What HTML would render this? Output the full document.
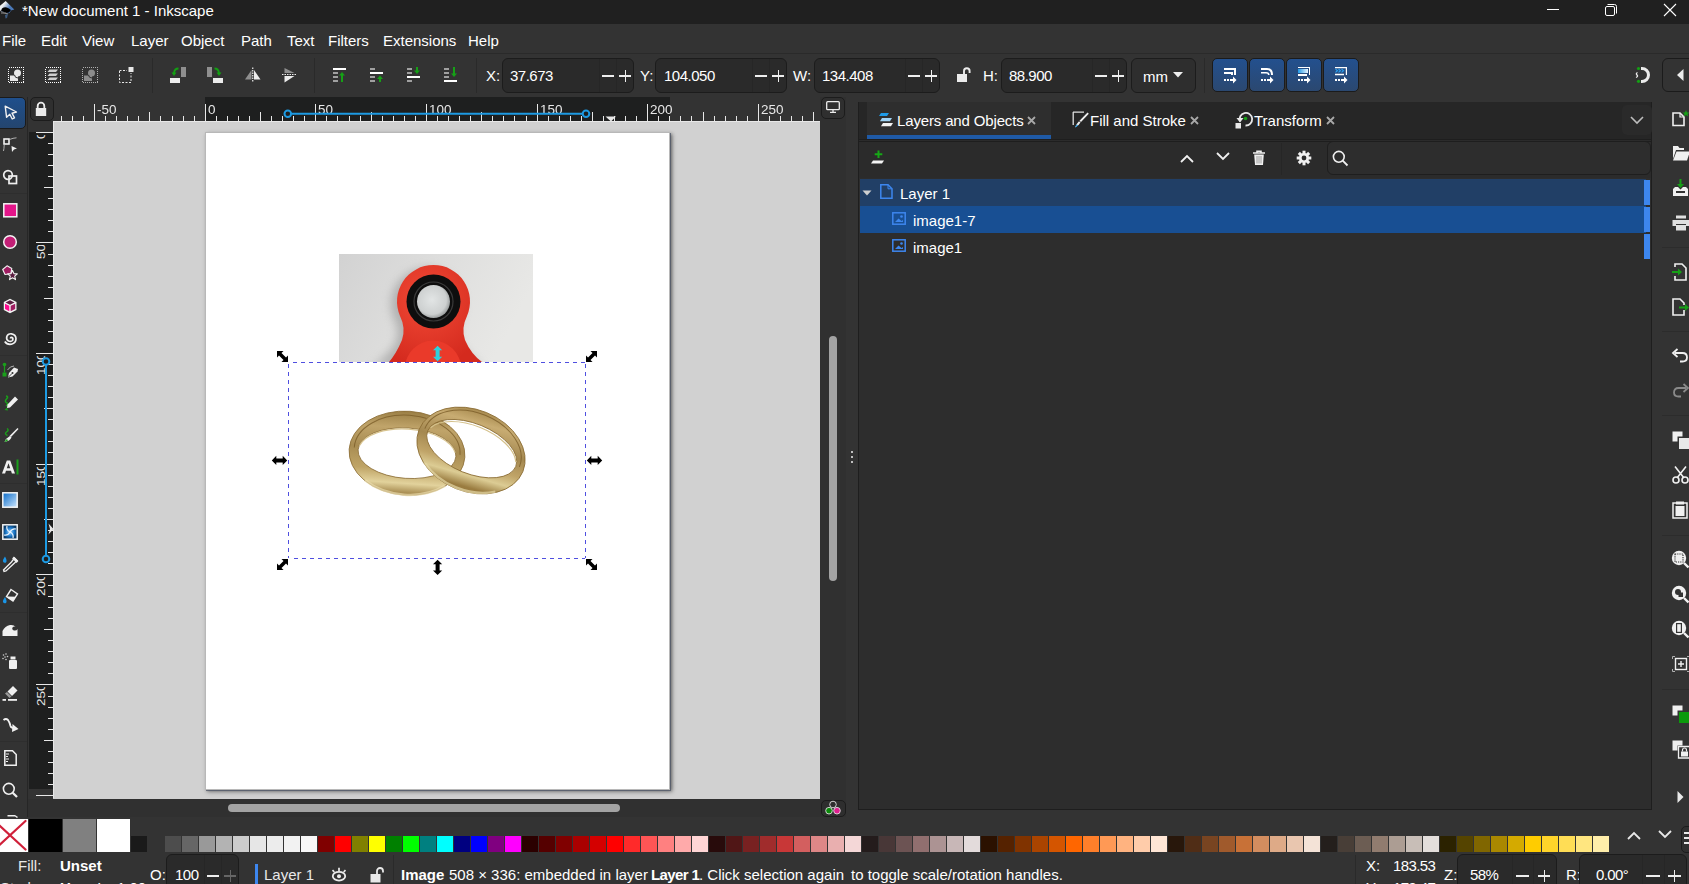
<!DOCTYPE html>
<html><head><meta charset="utf-8">
<style>
*{margin:0;padding:0;box-sizing:border-box}
html,body{width:1689px;height:884px;overflow:hidden;background:#333333;font-family:"Liberation Sans",sans-serif;color:#fff;position:relative}
.a{position:absolute}
.t{position:absolute;white-space:nowrap;line-height:1}
svg{position:absolute;overflow:visible}
.ent{position:absolute;background:#2a2a2a;border:1px solid #1c1c1c;border-radius:6px}
.dv{position:absolute;width:1px;background:#262626}
</style></head><body>

<!-- title bar -->
<div class="a" style="left:0;top:0;width:1689px;height:24px;background:#202020"></div>
<div class="t" style="left:22px;top:3px;font-size:15px;color:#fff">*New document 1 - Inkscape</div>
<!-- menubar -->
<div class="a" style="left:0;top:24px;width:1689px;height:29px;background:#333333"></div>
<div class="a" style="left:0;top:53px;width:1689px;height:1px;background:#2a2a2a"></div>
<!-- toolbar -->
<div class="a" style="left:0;top:54px;width:1689px;height:43px;background:#333333"></div>
<!-- left toolbox -->
<div class="a" style="left:27px;top:97px;width:1px;height:720px;background:#262626"></div>
<!-- ruler top -->
<div class="a" style="left:54px;top:97px;width:766px;height:24px;background:#333333"></div>
<div class="a" style="left:205px;top:97px;width:465px;height:24px;background:#1e1f1f"></div>
<!-- ruler left -->
<div class="a" style="left:29px;top:121px;width:24px;height:678px;background:#333333"></div>
<div class="a" style="left:29px;top:132px;width:24px;height:657px;background:#1e1f1f"></div>
<!-- canvas -->
<div class="a" style="left:53px;top:121px;width:767px;height:678px;background:#d1d1d1"></div>
<div class="a" style="left:205px;top:132px;width:465px;height:657px;background:#fff;box-shadow:2px 2px 3px rgba(0,0,0,.35)"></div>
<!-- scroll area right of canvas -->
<div class="a" style="left:820px;top:97px;width:26px;height:720px;background:#303030"></div>
<div class="a" style="left:28px;top:799px;width:792px;height:18px;background:#303030"></div>
<!-- dock -->
<div class="a" style="left:858px;top:102px;width:794px;height:708px;background:#2b2b2b;border:1px solid #1e1e1e"></div>

<!-- inkscape logo -->
<svg style="left:0;top:0" width="16" height="20" viewBox="0 0 16 20">
<defs><linearGradient id="lg1" x1="0" y1="0" x2="1" y2="0.6"><stop offset="0.35" stop-color="#f0f0f0"/><stop offset="0.75" stop-color="#4a78b8"/></linearGradient></defs>
<path d="M5.7 1 L14.3 9.5 L11 10.5 L9.5 13 L7 13.5 L5 12 L1 11.5 L-1 9 L-1 6.5 Z" fill="url(#lg1)"/>
<path d="M2 8.5 Q5 6.5 8 8 L11 10 L9 12.5 L6.5 13 Q3 11.5 1 11 Z" fill="#000"/>
<path d="M1 12.5 Q4 11.5 8 13.5 L7.5 14.5 Q4 13 1 13.5 Z" fill="#8a8a8a"/>
<path d="M5 15 L8 14 L7 18 L5.5 18.5 Z" fill="#3b5a80"/>
</svg>
<!-- window controls -->
<div class="a" style="left:1547px;top:9px;width:12px;height:1px;background:#fff"></div>
<svg style="left:1604px;top:3px" width="14" height="14" viewBox="0 0 14 14">
<rect x="1.5" y="3.5" width="9" height="9" rx="1.5" fill="none" stroke="#fff" stroke-width="1"/>
<path d="M3.5 1.5 H10.5 Q12.5 1.5 12.5 3.5 V10.5" fill="none" stroke="#fff" stroke-width="1"/>
</svg>
<svg style="left:1663px;top:3px" width="14" height="14" viewBox="0 0 14 14">
<path d="M1 1 L13 13 M13 1 L1 13" stroke="#fff" stroke-width="1.1"/>
</svg>
<div class="t" style="left:2px;top:33px;font-size:15px">File</div>
<div class="t" style="left:41px;top:33px;font-size:15px">Edit</div>
<div class="t" style="left:82px;top:33px;font-size:15px">View</div>
<div class="t" style="left:131px;top:33px;font-size:15px">Layer</div>
<div class="t" style="left:181px;top:33px;font-size:15px">Object</div>
<div class="t" style="left:241px;top:33px;font-size:15px">Path</div>
<div class="t" style="left:287px;top:33px;font-size:15px">Text</div>
<div class="t" style="left:328px;top:33px;font-size:15px">Filters</div>
<div class="t" style="left:383px;top:33px;font-size:15px">Extensions</div>
<div class="t" style="left:468px;top:33px;font-size:15px">Help</div>

<!-- toolbar icons -->
<svg style="left:8px;top:67px" width="16" height="16" viewBox="0 0 16 16">
<rect x="0.5" y="0.5" width="15" height="15" fill="none" stroke="#ffffff" stroke-width="1" stroke-dasharray="1 1" shape-rendering="crispEdges"/>
<circle cx="9.5" cy="6" r="3.5" fill="#e8e8e8"/><rect x="2" y="8.5" width="8" height="5.5" fill="#e8e8e8"/>
<path d="M6.5 8 A3.5 3.5 0 0 0 10 11" fill="none" stroke="#333" stroke-width="1"/>
</svg>
<svg style="left:45px;top:67px" width="16" height="16" viewBox="0 0 16 16">
<rect x="0.5" y="0.5" width="15" height="15" fill="none" stroke="#ffffff" stroke-width="1" stroke-dasharray="1 1" shape-rendering="crispEdges"/>
<path d="M4.5 2.5 H13 L11 5 H2.5 Z M4.5 6.5 H13 L11 9 H2.5 Z M4.5 10.5 H13 L11 13 H2.5 Z" fill="#d0d0d0"/>
</svg>
<svg style="left:82px;top:67px" width="16" height="16" viewBox="0 0 16 16">
<rect x="0.5" y="0.5" width="15" height="15" fill="none" stroke="#b0b0b0" stroke-width="1" stroke-dasharray="1 1" shape-rendering="crispEdges"/>
<circle cx="9.5" cy="6" r="3.5" fill="#8c8c8c"/><rect x="2" y="8.5" width="8" height="5.5" fill="#8c8c8c"/>
<path d="M6.5 8 A3.5 3.5 0 0 0 10 11" fill="none" stroke="#333" stroke-width="1"/>
</svg>
<svg style="left:119px;top:67px" width="16" height="16" viewBox="0 0 16 16">
<path d="M0.5 4 V15.5 H12 V6" fill="none" stroke="#e8e8e8" stroke-width="1" stroke-dasharray="2 1.5"/>
<path d="M0.5 3.5 H8" fill="none" stroke="#e8e8e8" stroke-width="1" stroke-dasharray="2 1.5"/>
<rect x="9.5" y="0" width="5" height="5" fill="#e8e8e8"/>
</svg>
<div class="a" style="left:152px;top:58px;width:1px;height:35px;background:#2a2a2a"></div>
<!-- rotate ccw -->
<svg style="left:170px;top:67px" width="16" height="16" viewBox="0 0 16 16">
<rect x="11" y="0" width="5" height="10" fill="#8f8f8f"/>
<rect x="0" y="11" width="10" height="5" fill="#ececec"/>
<path d="M8.5 1.5 Q4.5 1.5 4 6" fill="none" stroke="#12a012" stroke-width="1.8"/>
<path d="M1.5 5.5 L4 9 L6.5 5.5 Z" fill="#12a012"/>
</svg>
<svg style="left:207px;top:67px" width="16" height="16" viewBox="0 0 16 16">
<rect x="0" y="0" width="5" height="10" fill="#8f8f8f"/>
<rect x="6" y="11" width="10" height="5" fill="#ececec"/>
<path d="M7.5 1.5 Q11.5 1.5 12 6" fill="none" stroke="#12a012" stroke-width="1.8"/>
<path d="M9.5 5.5 L12 9 L14.5 5.5 Z" fill="#12a012"/>
</svg>
<!-- flip h -->
<svg style="left:245px;top:67px" width="16" height="16" viewBox="0 0 16 16">
<path d="M6.5 3 L0 12.5 H6.5 Z" fill="#8f8f8f"/><path d="M9 3 L15.5 12.5 H9 Z" fill="#ececec"/>
<path d="M7.75 0.5 V15.5" stroke="#ececec" stroke-width="1.2" stroke-dasharray="1.5 1"/>
</svg>
<svg style="left:282px;top:67px" width="16" height="16" viewBox="0 0 16 16">
<path d="M2.5 1 L12.5 6 H2.5 Z" fill="#8f8f8f"/><path d="M2.5 9 L12.5 9 L2.5 15.5 Z" fill="#ececec"/>
<path d="M0 7.5 H15" stroke="#ececec" stroke-width="1.2" stroke-dasharray="1.5 1"/>
</svg>
<div class="a" style="left:314px;top:58px;width:1px;height:35px;background:#2a2a2a"></div>
<!-- z-order -->
<svg style="left:333px;top:67px" width="14" height="16" viewBox="0 0 14 16">
<rect x="0" y="1" width="13" height="2" fill="#fff"/>
<rect x="0" y="5" width="5" height="2" fill="#a0a0a0"/><rect x="0" y="9" width="5" height="2" fill="#a0a0a0"/><rect x="0" y="13" width="5" height="2" fill="#a0a0a0"/>
<path d="M9 15 V8" stroke="#16a016" stroke-width="2"/><path d="M6 8.5 L9 5 L12 8.5 Z" fill="#16a016"/>
</svg>
<svg style="left:370px;top:67px" width="14" height="16" viewBox="0 0 14 16">
<rect x="0" y="1" width="5" height="2" fill="#a0a0a0"/>
<rect x="0" y="5" width="13" height="2" fill="#fff"/>
<rect x="0" y="9" width="5" height="2" fill="#a0a0a0"/><rect x="0" y="13" width="5" height="2" fill="#a0a0a0"/>
<path d="M10 15 V11" stroke="#16a016" stroke-width="2"/><path d="M7 12 L10 8.5 L13 12 Z" fill="#16a016"/>
</svg>
<svg style="left:407px;top:67px" width="14" height="16" viewBox="0 0 14 16">
<rect x="0" y="1" width="5" height="2" fill="#a0a0a0"/><rect x="0" y="5" width="5" height="2" fill="#a0a0a0"/>
<rect x="0" y="9" width="13" height="2" fill="#fff"/>
<rect x="0" y="13" width="5" height="2" fill="#a0a0a0"/>
<path d="M10 0 V4" stroke="#16a016" stroke-width="2"/><path d="M7 3.5 L10 7 L13 3.5 Z" fill="#16a016"/>
</svg>
<svg style="left:444px;top:67px" width="14" height="16" viewBox="0 0 14 16">
<rect x="0" y="1" width="5" height="2" fill="#a0a0a0"/><rect x="0" y="5" width="5" height="2" fill="#a0a0a0"/><rect x="0" y="9" width="5" height="2" fill="#a0a0a0"/>
<rect x="0" y="13" width="13" height="2" fill="#fff"/>
<path d="M10 0 V7" stroke="#16a016" stroke-width="2"/><path d="M7 6.5 L10 10 L13 6.5 Z" fill="#16a016"/>
</svg>
<div class="a" style="left:476px;top:58px;width:1px;height:35px;background:#2a2a2a"></div>
<!-- X Y W H -->
<div class="t" style="left:486px;top:68px;font-size:15px">X:</div>
<div class="ent" style="left:502px;top:58px;width:132px;height:35px"></div>
<div class="dv" style="left:599px;top:59px;height:33px"></div><div class="dv" style="left:616px;top:59px;height:33px"></div>
<div class="t" style="left:510px;top:68px;font-size:15px;letter-spacing:-0.5px">37.673</div>
<div class="a" style="left:602px;top:75px;width:12px;height:1.5px;background:#eee"></div>
<div class="a" style="left:619px;top:75px;width:12px;height:1.5px;background:#eee"></div><div class="a" style="left:624.5px;top:69.5px;width:1.5px;height:12px;background:#eee"></div>

<div class="t" style="left:640px;top:68px;font-size:15px">Y:</div>
<div class="ent" style="left:655px;top:58px;width:132px;height:35px"></div>
<div class="dv" style="left:752px;top:59px;height:33px"></div><div class="dv" style="left:769px;top:59px;height:33px"></div>
<div class="t" style="left:664px;top:68px;font-size:15px;letter-spacing:-0.5px">104.050</div>
<div class="a" style="left:755px;top:75px;width:12px;height:1.5px;background:#eee"></div>
<div class="a" style="left:772px;top:75px;width:12px;height:1.5px;background:#eee"></div><div class="a" style="left:777.5px;top:69.5px;width:1.5px;height:12px;background:#eee"></div>

<div class="t" style="left:793px;top:68px;font-size:15px">W:</div>
<div class="ent" style="left:814px;top:58px;width:126px;height:35px"></div>
<div class="dv" style="left:905px;top:59px;height:33px"></div><div class="dv" style="left:922px;top:59px;height:33px"></div>
<div class="t" style="left:822px;top:68px;font-size:15px;letter-spacing:-0.5px">134.408</div>
<div class="a" style="left:908px;top:75px;width:12px;height:1.5px;background:#eee"></div>
<div class="a" style="left:925px;top:75px;width:12px;height:1.5px;background:#eee"></div><div class="a" style="left:930.5px;top:69.5px;width:1.5px;height:12px;background:#eee"></div>
<!-- lock -->
<svg style="left:957px;top:67px" width="14" height="16" viewBox="0 0 14 16">
<rect x="0" y="7" width="10" height="8" fill="#ececec"/>
<path d="M7 7.5 V4 A2.8 2.8 0 0 1 12.6 4 V6" fill="none" stroke="#ececec" stroke-width="1.9"/>
</svg>
<div class="t" style="left:983px;top:68px;font-size:15px">H:</div>
<div class="ent" style="left:1001px;top:58px;width:126px;height:35px"></div>
<div class="dv" style="left:1092px;top:59px;height:33px"></div><div class="dv" style="left:1109px;top:59px;height:33px"></div>
<div class="t" style="left:1009px;top:68px;font-size:15px;letter-spacing:-0.5px">88.900</div>
<div class="a" style="left:1095px;top:75px;width:12px;height:1.5px;background:#eee"></div>
<div class="a" style="left:1112px;top:75px;width:12px;height:1.5px;background:#eee"></div><div class="a" style="left:1117.5px;top:69.5px;width:1.5px;height:12px;background:#eee"></div>
<!-- mm dropdown -->
<div class="ent" style="left:1131px;top:58px;width:65px;height:35px;background:#2e2e2e"></div>
<div class="t" style="left:1143px;top:69px;font-size:15px">mm</div>
<svg style="left:1173px;top:72px" width="10" height="6" viewBox="0 0 10 6"><path d="M0 0 H10 L5 5.5 Z" fill="#eee"/></svg>
<div class="a" style="left:1204px;top:58px;width:1px;height:35px;background:#2a2a2a"></div>
<!-- mode toggle buttons -->
<div class="a" style="left:1212px;top:58px;width:36px;height:34px;border:1px solid #1b1b1b;border-radius:5px;background:linear-gradient(#23508e,#2b4870)"></div>
<div class="a" style="left:1249px;top:58px;width:36px;height:34px;border:1px solid #1b1b1b;border-radius:5px;background:linear-gradient(#23508e,#2b4870)"></div>
<div class="a" style="left:1286px;top:58px;width:36px;height:34px;border:1px solid #1b1b1b;border-radius:5px;background:linear-gradient(#23508e,#2b4870)"></div>
<div class="a" style="left:1323px;top:58px;width:36px;height:34px;border:1px solid #1b1b1b;border-radius:5px;background:linear-gradient(#23508e,#2b4870)"></div>
<svg style="left:1224px;top:67px" width="14" height="16" viewBox="0 0 14 16" shape-rendering="crispEdges">
<path d="M0 1 H12 V8 H10 V3 H0 Z" fill="#fff"/><path d="M0 5 H9 V8 H7 V6.5 H0 Z" fill="#fff"/>
<rect x="0" y="12" width="2" height="2" fill="#fff"/><rect x="3" y="12" width="2" height="2" fill="#fff"/><rect x="6" y="12" width="4" height="2" fill="#fff"/>
<path d="M9 9.5 L12.5 13 L9 16.5 Z" fill="#fff" shape-rendering="auto"/>
</svg>
<svg style="left:1261px;top:67px" width="14" height="16" viewBox="0 0 14 16">
<path d="M0 2 H6 Q11 2 11 8" fill="none" stroke="#fff" stroke-width="2"/><path d="M0 5.8 H5 Q7.8 5.8 7.8 8" fill="none" stroke="#fff" stroke-width="1.6"/>
<rect x="0" y="12" width="2" height="2" fill="#fff"/><rect x="3" y="12" width="2" height="2" fill="#fff"/><rect x="6" y="12" width="4" height="2" fill="#fff"/>
<path d="M9 9.5 L12.5 13 L9 16.5 Z" fill="#fff"/>
</svg>
<svg style="left:1298px;top:67px" width="14" height="16" viewBox="0 0 14 16" shape-rendering="crispEdges">
<defs><linearGradient id="bg3" x1="0" x2="1"><stop offset="0" stop-color="#1f9ae8"/><stop offset="1" stop-color="#e8f4ff"/></linearGradient></defs>
<rect x="0" y="2" width="10" height="4" fill="url(#bg3)"/>
<path d="M0 0 H12 V8 H11 V1 H0 Z" fill="#fff"/><path d="M0 7 H9 V8.5 H0 Z" fill="#fff"/>
<rect x="0" y="12" width="2" height="2" fill="#fff"/><rect x="3" y="12" width="2" height="2" fill="#fff"/><rect x="6" y="12" width="4" height="2" fill="#fff"/>
<path d="M9 9.5 L12.5 13 L9 16.5 Z" fill="#fff" shape-rendering="auto"/>
</svg>
<svg style="left:1335px;top:67px" width="14" height="16" viewBox="0 0 14 16">
<path d="M0 0.6 H11.4 V8" fill="none" stroke="#fff" stroke-width="1.2"/><path d="M0 7.5 H9" fill="none" stroke="#fff" stroke-width="1.5"/>
<path d="M0.5 2 L2.5 3.7 L0.5 5.4 M3.5 2 L5.5 3.7 L3.5 5.4 M6.5 2 L8.5 3.7 L6.5 5.4" fill="none" stroke="#2aa0f0" stroke-width="1.1"/>
<rect x="0" y="12" width="2" height="2" fill="#fff"/><rect x="3" y="12" width="2" height="2" fill="#fff"/><rect x="6" y="12" width="4" height="2" fill="#fff"/>
<path d="M9 9.5 L12.5 13 L9 16.5 Z" fill="#fff"/>
</svg>
<!-- snap -->
<svg style="left:1634px;top:66px" width="18" height="18" viewBox="0 0 18 18">
<path d="M7 2.5 H8 A6.5 6.5 0 0 1 8 15.5 H7" fill="none" stroke="#ececec" stroke-width="3"/>
<circle cx="4.5" cy="2.5" r="1.6" fill="#14a014"/><circle cx="4.5" cy="15.3" r="1.6" fill="#14a014"/>
<path d="M3.5 6.5 Q1.5 7.5 3 9 Q4.5 10.5 2 11.5" fill="none" stroke="#ececec" stroke-width="1.3"/>
</svg>
<div class="a" style="left:1662px;top:58px;width:40px;height:34px;border:1px solid #1b1b1b;border-radius:6px;background:#333"></div>
<svg style="left:1677px;top:69px" width="7" height="12" viewBox="0 0 7 12"><path d="M6.5 0 V12 L0 6 Z" fill="#ececec"/></svg>

<!-- selector active -->
<div class="a" style="left:-6px;top:97px;width:32px;height:32px;border-radius:5px;background:linear-gradient(#1f4f8c,#24456e);border:1px solid #1a1a1a"></div>
<svg style="left:4px;top:105px" width="14" height="16" viewBox="0 0 14 16">
<path d="M1.2 1.2 L12.5 7 L8 8.2 L10.5 12.8 L8.2 14 L5.8 9.3 L2.6 12.3 Z" fill="none" stroke="#f0f0f0" stroke-width="1.4" stroke-linejoin="round"/>
</svg>
<!-- node -->
<svg style="left:3px;top:137px" width="16" height="16" viewBox="0 0 16 16">
<rect x="1" y="2" width="5" height="5" fill="none" stroke="#f0f0f0" stroke-width="1.6"/>
<path d="M6.5 2.5 Q10 1 13.5 0.8" fill="none" stroke="#cfcfcf" stroke-width="0.8"/>
<path d="M1.2 8 Q1 12 0.5 14" fill="none" stroke="#cfcfcf" stroke-width="0.8"/>
<path d="M8.5 9 L14 11.5 L11 12.5 L9 15 Z" fill="#f0f0f0"/>
</svg>
<!-- shape builder -->
<svg style="left:2px;top:169px" width="16" height="16" viewBox="0 0 16 16">
<circle cx="6" cy="6" r="4.3" fill="none" stroke="#f0f0f0" stroke-width="1.7"/>
<rect x="7" y="7" width="7.5" height="7.5" fill="none" stroke="#f0f0f0" stroke-width="1.7"/>
</svg>
<div class="a" style="left:0;top:193px;width:27px;height:1px;background:#2e2e2e"></div>
<!-- rect -->
<svg style="left:3px;top:203px" width="15" height="15" viewBox="0 0 15 15">
<rect x="0.8" y="0.8" width="13" height="13" fill="#e4168a" stroke="#f4f4f4" stroke-width="1.5"/>
</svg>
<!-- ellipse -->
<svg style="left:3px;top:235px" width="15" height="15" viewBox="0 0 15 15">
<circle cx="7" cy="7" r="6.3" fill="#c31f76" stroke="#f4f4f4" stroke-width="1.5"/>
</svg>
<!-- star -->
<svg style="left:2px;top:265px" width="16" height="16" viewBox="0 0 16 16">
<path d="M5 0.8 L9.8 3.5 L8.8 8.8 L3 9.5 L0.7 4.5 Z" fill="#a01d62" stroke="#f4f4f4" stroke-width="1.1" stroke-linejoin="round"/>
<path d="M10.5 5.5 L11.9 8.6 L15.3 8.9 L12.7 11.2 L13.5 14.6 L10.5 12.8 L7.5 14.6 L8.3 11.2 L5.7 8.9 L9.1 8.6 Z" fill="#5a1e40" stroke="#f4f4f4" stroke-width="1.1" stroke-linejoin="round"/>
</svg>
<!-- 3d box -->
<svg style="left:3px;top:298px" width="15" height="16" viewBox="0 0 15 16">
<path d="M7 0.8 L13.5 4 L13.5 12 L7 15.2 L0.8 12 L0.8 4 Z" fill="#f4f4f4"/>
<path d="M7 2.3 L11.5 4.5 L7 6.7 L2.5 4.5 Z" fill="#5a1e40"/>
<path d="M2 5.7 L6.3 7.8 L6.3 13.2 L2 11.1 Z" fill="#ff0d91"/>
<path d="M12.2 5.7 L7.7 7.8 L7.7 13.2 L12.2 11.1 Z" fill="#a01d62"/>
</svg>
<!-- spiral -->
<svg style="left:3px;top:331px" width="15" height="15" viewBox="0 0 15 15">
<path d="M7.5 7.5 Q7.5 6 9 6.5 Q10.5 7.5 9.5 9.5 Q8 11 5.5 10 Q3 8.5 3.8 5.5 Q5 2.5 8.5 2.8 Q12.8 3.5 13 7.5 Q13 12 8.5 13.2 Q4 14 1.8 10.5" fill="none" stroke="#f0f0f0" stroke-width="1.7"/>
</svg>
<div class="a" style="left:0;top:355px;width:27px;height:1px;background:#2e2e2e"></div>
<!-- pen -->
<svg style="left:2px;top:362px" width="17" height="17" viewBox="0 0 17 17">
<circle cx="2.5" cy="2.5" r="1.8" fill="#1aa01a"/><rect x="0.5" y="10.5" width="4" height="4" fill="#1aa01a"/>
<path d="M2.5 4 V10.5" stroke="#1aa01a" stroke-width="1.2"/>
<path d="M5.5 8 Q8 4 12 4" fill="none" stroke="#cfcfcf" stroke-width="0.8"/>
<path d="M16 7 L12 5.5 L7 11 L6 15.5 L10.5 14.5 L15.5 9.5 Z" fill="#f0f0f0"/>
<path d="M6.5 15 L10 11.5" stroke="#333" stroke-width="0.9"/><circle cx="10.5" cy="11" r="1" fill="#333"/>
</svg>
<!-- pencil -->
<svg style="left:3px;top:395px" width="16" height="16" viewBox="0 0 16 16">
<path d="M3 1 Q6 1.5 3.5 4 Q1 6.5 4 8 Q6 9 3 11" fill="none" stroke="#1aa01a" stroke-width="1.5"/>
<path d="M12 1.5 L15 4.5 L7 12.5 L4 13 L4.5 9.5 Z" fill="#f0f0f0"/>
<path d="M1.5 15 L4 12.5 L5 15.5 Z" fill="#1aa01a"/>
</svg>
<!-- calligraphy -->
<svg style="left:3px;top:427px" width="16" height="16" viewBox="0 0 16 16">
<path d="M4 1.5 Q6.5 3 3.5 5 Q1 7 4.5 8.5" fill="none" stroke="#1aa01a" stroke-width="1.4"/>
<path d="M14.5 1 L15.5 2 L8 10 L6.5 9 Z" fill="#f0f0f0"/>
<path d="M7 9 L8.5 10.5 Q7 14 1.5 15 Q3 11 7 9 Z" fill="#f0f0f0"/><path d="M1.5 15 Q2.5 12.5 4 12 L5 13.5 Q3.5 14.5 1.5 15Z" fill="#1aa01a"/>
</svg>
<!-- text -->
<svg style="left:2px;top:459px" width="18" height="16" viewBox="0 0 18 16">
<path d="M0 14.5 L4.8 1.5 H8.2 L13 14.5 H9.9 L9 11.8 H4 L3.1 14.5 Z M4.8 9.2 H8.2 L6.5 4.3 Z" fill="#f0f0f0" fill-rule="evenodd"/>
<rect x="14.5" y="0.5" width="2" height="15" fill="#1aa01a"/>
</svg>
<div class="a" style="left:0;top:483px;width:27px;height:1px;background:#2e2e2e"></div>
<!-- gradient -->
<svg style="left:2px;top:492px" width="16" height="16" viewBox="0 0 16 16">
<defs><linearGradient id="tg1" x1="0" y1="0" x2="1" y2="1"><stop offset="0" stop-color="#0a6bc8"/><stop offset="1" stop-color="#cfe8ff"/></linearGradient></defs>
<rect x="0.8" y="0.8" width="14.4" height="14.4" fill="url(#tg1)" stroke="#f4f4f4" stroke-width="1.5"/>
</svg>
<!-- mesh -->
<svg style="left:2px;top:524px" width="16" height="16" viewBox="0 0 16 16">
<defs><radialGradient id="tg2"><stop offset="0" stop-color="#9fd6ff"/><stop offset="0.6" stop-color="#1976c8"/><stop offset="1" stop-color="#0b3a66"/></radialGradient></defs>
<rect x="0.8" y="0.8" width="14.4" height="14.4" fill="url(#tg2)" stroke="#f4f4f4" stroke-width="1.5"/>
<path d="M8 8 Q4 6 5 2 M8 8 Q10 4 14 5 M8 8 Q12 10 11 14 M8 8 Q6 12 2 11" fill="none" stroke="#e8f4ff" stroke-width="1.2"/>
</svg>
<!-- dropper -->
<svg style="left:2px;top:556px" width="17" height="16" viewBox="0 0 17 16">
<path d="M3 0.5 Q0.5 4 1 5.5 Q2 7.5 4 6.5 Q5.5 5 3 0.5 Z" fill="#1a96e8"/>
<path d="M12.5 2 L15 4.5 L12.5 7 L4 15 L2 15.5 L1.5 14 L9.5 6 Z" fill="none" stroke="#f0f0f0" stroke-width="1.3"/>
<path d="M11 1.5 L15.5 6" stroke="#f0f0f0" stroke-width="2.5"/>
</svg>
<!-- bucket -->
<svg style="left:2px;top:588px" width="17" height="17" viewBox="0 0 17 17">
<path d="M9 1.5 L15.5 6 L11 13 L4.5 8.5 Z" fill="none" stroke="#f0f0f0" stroke-width="1.4"/>
<path d="M6 8.5 L14 8.8 L11 13 L5 9.5Z" fill="#f0f0f0"/>
<path d="M3 9 Q0.5 12.5 1 14 Q2 16 4 15 Q5.5 13.5 3 9 Z" fill="#1a96e8"/>
</svg>
<div class="a" style="left:0;top:612px;width:27px;height:1px;background:#2e2e2e"></div>
<!-- tweak -->
<svg style="left:2px;top:621px" width="17" height="16" viewBox="0 0 17 16">
<path d="M0.5 15 V10 Q3 5 8 4 Q12 3.5 13.5 6 Q12 5 10.5 6.5 Q9.5 8.5 12 9.5 Q14.5 10 15.5 8 V15 Z" fill="#f0f0f0"/>
</svg>
<!-- spray -->
<svg style="left:2px;top:653px" width="17" height="17" viewBox="0 0 17 17">
<rect x="7" y="7" width="8" height="9" rx="1" fill="#f0f0f0"/><rect x="8.5" y="3.5" width="5" height="3" fill="#f0f0f0"/>
<g fill="#cfcfcf"><circle cx="1.5" cy="2" r="0.8"/><circle cx="4" cy="1" r="0.8"/><circle cx="3" cy="4" r="0.8"/><circle cx="5.5" cy="3.5" r="0.8"/><circle cx="1" cy="5.5" r="0.8"/><circle cx="4" cy="6.5" r="0.8"/></g>
</svg>
<!-- eraser -->
<svg style="left:2px;top:685px" width="17" height="16" viewBox="0 0 17 16">
<path d="M11 1 L15.5 5.5 L10 11 L5.5 6.5 Z" fill="#f0f0f0"/>
<path d="M5 7 L9.5 11.5 L7.5 13 L3 8.5 Z" fill="#9a9a9a"/>
<rect x="0.5" y="14" width="3.5" height="1.8" fill="#f0f0f0"/><rect x="6" y="14" width="9" height="1.8" fill="#f0f0f0"/>
</svg>
<!-- connector -->
<svg style="left:3px;top:717px" width="16" height="16" viewBox="0 0 16 16">
<path d="M0.5 3 Q3 1 5 3 Q7 6 7.5 9 Q8 11 11 11" fill="none" stroke="#f0f0f0" stroke-width="1.8"/>
<path d="M9.5 7 L15.5 12 L9 15 Z" fill="#f0f0f0"/>
</svg>
<div class="a" style="left:0;top:741px;width:27px;height:1px;background:#2e2e2e"></div>
<!-- pages -->
<svg style="left:4px;top:750px" width="13" height="16" viewBox="0 0 13 16">
<path d="M0.8 0.8 H8.5 L12.2 4.5 V15.2 H0.8 Z" fill="none" stroke="#f0f0f0" stroke-width="1.5"/>
<path d="M2 4 H5 M2 6.5 H4 M2 9 H5 M2 11.5 H4" stroke="#f0f0f0" stroke-width="1.1"/>
</svg>
<!-- zoom -->
<svg style="left:2px;top:782px" width="16" height="16" viewBox="0 0 16 16">
<circle cx="6.8" cy="6.8" r="5.4" fill="none" stroke="#f0f0f0" stroke-width="1.6"/>
<path d="M10.7 10.7 L15 15" stroke="#f0f0f0" stroke-width="2.3"/>
</svg>
<!-- measure partial -->
<svg style="left:7px;top:814px" width="12" height="6" viewBox="0 0 12 6">
<path d="M0.5 1 H8 L11 3 L10 4 L8 2.5 H0.5 Z" fill="#f0f0f0"/>
</svg>

<div class="a" style="left:61px;top:116px;width:1px;height:5px;background:#e8e8e8"></div>
<div class="a" style="left:72px;top:116px;width:1px;height:5px;background:#e8e8e8"></div>
<div class="a" style="left:83px;top:116px;width:1px;height:5px;background:#e8e8e8"></div>
<div class="a" style="left:94px;top:104px;width:1px;height:17px;background:#e8e8e8"></div>
<div class="t" style="left:97px;top:104px;font-size:13.5px;color:#e8e8e8;transform-origin:0 0;transform:scaleY(0.88)">-50</div>
<div class="a" style="left:105px;top:116px;width:1px;height:5px;background:#e8e8e8"></div>
<div class="a" style="left:116px;top:116px;width:1px;height:5px;background:#e8e8e8"></div>
<div class="a" style="left:127px;top:116px;width:1px;height:5px;background:#e8e8e8"></div>
<div class="a" style="left:138px;top:116px;width:1px;height:5px;background:#e8e8e8"></div>
<div class="a" style="left:149px;top:112px;width:1px;height:9px;background:#e8e8e8"></div>
<div class="a" style="left:160px;top:116px;width:1px;height:5px;background:#e8e8e8"></div>
<div class="a" style="left:172px;top:116px;width:1px;height:5px;background:#e8e8e8"></div>
<div class="a" style="left:183px;top:116px;width:1px;height:5px;background:#e8e8e8"></div>
<div class="a" style="left:194px;top:116px;width:1px;height:5px;background:#e8e8e8"></div>
<div class="a" style="left:205px;top:104px;width:1px;height:17px;background:#e8e8e8"></div>
<div class="t" style="left:208px;top:104px;font-size:13.5px;color:#e8e8e8;transform-origin:0 0;transform:scaleY(0.88)">0</div>
<div class="a" style="left:216px;top:116px;width:1px;height:5px;background:#e8e8e8"></div>
<div class="a" style="left:227px;top:116px;width:1px;height:5px;background:#e8e8e8"></div>
<div class="a" style="left:238px;top:116px;width:1px;height:5px;background:#e8e8e8"></div>
<div class="a" style="left:249px;top:116px;width:1px;height:5px;background:#e8e8e8"></div>
<div class="a" style="left:260px;top:112px;width:1px;height:9px;background:#e8e8e8"></div>
<div class="a" style="left:271px;top:116px;width:1px;height:5px;background:#e8e8e8"></div>
<div class="a" style="left:282px;top:116px;width:1px;height:5px;background:#e8e8e8"></div>
<div class="a" style="left:293px;top:116px;width:1px;height:5px;background:#e8e8e8"></div>
<div class="a" style="left:304px;top:116px;width:1px;height:5px;background:#e8e8e8"></div>
<div class="a" style="left:315px;top:104px;width:1px;height:17px;background:#e8e8e8"></div>
<div class="t" style="left:318px;top:104px;font-size:13.5px;color:#e8e8e8;transform-origin:0 0;transform:scaleY(0.88)">50</div>
<div class="a" style="left:326px;top:116px;width:1px;height:5px;background:#e8e8e8"></div>
<div class="a" style="left:337px;top:116px;width:1px;height:5px;background:#e8e8e8"></div>
<div class="a" style="left:349px;top:116px;width:1px;height:5px;background:#e8e8e8"></div>
<div class="a" style="left:360px;top:116px;width:1px;height:5px;background:#e8e8e8"></div>
<div class="a" style="left:371px;top:112px;width:1px;height:9px;background:#e8e8e8"></div>
<div class="a" style="left:382px;top:116px;width:1px;height:5px;background:#e8e8e8"></div>
<div class="a" style="left:393px;top:116px;width:1px;height:5px;background:#e8e8e8"></div>
<div class="a" style="left:404px;top:116px;width:1px;height:5px;background:#e8e8e8"></div>
<div class="a" style="left:415px;top:116px;width:1px;height:5px;background:#e8e8e8"></div>
<div class="a" style="left:426px;top:104px;width:1px;height:17px;background:#e8e8e8"></div>
<div class="t" style="left:429px;top:104px;font-size:13.5px;color:#e8e8e8;transform-origin:0 0;transform:scaleY(0.88)">100</div>
<div class="a" style="left:437px;top:116px;width:1px;height:5px;background:#e8e8e8"></div>
<div class="a" style="left:448px;top:116px;width:1px;height:5px;background:#e8e8e8"></div>
<div class="a" style="left:459px;top:116px;width:1px;height:5px;background:#e8e8e8"></div>
<div class="a" style="left:470px;top:116px;width:1px;height:5px;background:#e8e8e8"></div>
<div class="a" style="left:481px;top:112px;width:1px;height:9px;background:#e8e8e8"></div>
<div class="a" style="left:492px;top:116px;width:1px;height:5px;background:#e8e8e8"></div>
<div class="a" style="left:503px;top:116px;width:1px;height:5px;background:#e8e8e8"></div>
<div class="a" style="left:514px;top:116px;width:1px;height:5px;background:#e8e8e8"></div>
<div class="a" style="left:526px;top:116px;width:1px;height:5px;background:#e8e8e8"></div>
<div class="a" style="left:537px;top:104px;width:1px;height:17px;background:#e8e8e8"></div>
<div class="t" style="left:540px;top:104px;font-size:13.5px;color:#e8e8e8;transform-origin:0 0;transform:scaleY(0.88)">150</div>
<div class="a" style="left:548px;top:116px;width:1px;height:5px;background:#e8e8e8"></div>
<div class="a" style="left:559px;top:116px;width:1px;height:5px;background:#e8e8e8"></div>
<div class="a" style="left:570px;top:116px;width:1px;height:5px;background:#e8e8e8"></div>
<div class="a" style="left:581px;top:116px;width:1px;height:5px;background:#e8e8e8"></div>
<div class="a" style="left:592px;top:112px;width:1px;height:9px;background:#e8e8e8"></div>
<div class="a" style="left:603px;top:116px;width:1px;height:5px;background:#e8e8e8"></div>
<div class="a" style="left:614px;top:116px;width:1px;height:5px;background:#e8e8e8"></div>
<div class="a" style="left:625px;top:116px;width:1px;height:5px;background:#e8e8e8"></div>
<div class="a" style="left:636px;top:116px;width:1px;height:5px;background:#e8e8e8"></div>
<div class="a" style="left:647px;top:104px;width:1px;height:17px;background:#e8e8e8"></div>
<div class="t" style="left:650px;top:104px;font-size:13.5px;color:#e8e8e8;transform-origin:0 0;transform:scaleY(0.88)">200</div>
<div class="a" style="left:658px;top:116px;width:1px;height:5px;background:#e8e8e8"></div>
<div class="a" style="left:669px;top:116px;width:1px;height:5px;background:#e8e8e8"></div>
<div class="a" style="left:680px;top:116px;width:1px;height:5px;background:#e8e8e8"></div>
<div class="a" style="left:691px;top:116px;width:1px;height:5px;background:#e8e8e8"></div>
<div class="a" style="left:703px;top:112px;width:1px;height:9px;background:#e8e8e8"></div>
<div class="a" style="left:714px;top:116px;width:1px;height:5px;background:#e8e8e8"></div>
<div class="a" style="left:725px;top:116px;width:1px;height:5px;background:#e8e8e8"></div>
<div class="a" style="left:736px;top:116px;width:1px;height:5px;background:#e8e8e8"></div>
<div class="a" style="left:747px;top:116px;width:1px;height:5px;background:#e8e8e8"></div>
<div class="a" style="left:758px;top:104px;width:1px;height:17px;background:#e8e8e8"></div>
<div class="t" style="left:761px;top:104px;font-size:13.5px;color:#e8e8e8;transform-origin:0 0;transform:scaleY(0.88)">250</div>
<div class="a" style="left:769px;top:116px;width:1px;height:5px;background:#e8e8e8"></div>
<div class="a" style="left:780px;top:116px;width:1px;height:5px;background:#e8e8e8"></div>
<div class="a" style="left:791px;top:116px;width:1px;height:5px;background:#e8e8e8"></div>
<div class="a" style="left:802px;top:116px;width:1px;height:5px;background:#e8e8e8"></div>
<div class="a" style="left:813px;top:112px;width:1px;height:9px;background:#e8e8e8"></div>
<div class="a" style="left:54px;top:121px;width:766px;height:1px;background:#e8e8e8"></div>
<div class="a" style="left:36px;top:132px;width:17px;height:1px;background:#e8e8e8"></div>
<div class="a" style="left:48px;top:143px;width:5px;height:1px;background:#e8e8e8"></div>
<div class="a" style="left:48px;top:154px;width:5px;height:1px;background:#e8e8e8"></div>
<div class="a" style="left:48px;top:165px;width:5px;height:1px;background:#e8e8e8"></div>
<div class="a" style="left:48px;top:176px;width:5px;height:1px;background:#e8e8e8"></div>
<div class="a" style="left:44px;top:187px;width:9px;height:1px;background:#e8e8e8"></div>
<div class="a" style="left:48px;top:198px;width:5px;height:1px;background:#e8e8e8"></div>
<div class="a" style="left:48px;top:209px;width:5px;height:1px;background:#e8e8e8"></div>
<div class="a" style="left:48px;top:220px;width:5px;height:1px;background:#e8e8e8"></div>
<div class="a" style="left:48px;top:231px;width:5px;height:1px;background:#e8e8e8"></div>
<div class="a" style="left:36px;top:242px;width:17px;height:1px;background:#e8e8e8"></div>
<div class="a" style="left:48px;top:254px;width:5px;height:1px;background:#e8e8e8"></div>
<div class="a" style="left:48px;top:265px;width:5px;height:1px;background:#e8e8e8"></div>
<div class="a" style="left:48px;top:276px;width:5px;height:1px;background:#e8e8e8"></div>
<div class="a" style="left:48px;top:287px;width:5px;height:1px;background:#e8e8e8"></div>
<div class="a" style="left:44px;top:298px;width:9px;height:1px;background:#e8e8e8"></div>
<div class="a" style="left:48px;top:309px;width:5px;height:1px;background:#e8e8e8"></div>
<div class="a" style="left:48px;top:320px;width:5px;height:1px;background:#e8e8e8"></div>
<div class="a" style="left:48px;top:331px;width:5px;height:1px;background:#e8e8e8"></div>
<div class="a" style="left:48px;top:342px;width:5px;height:1px;background:#e8e8e8"></div>
<div class="a" style="left:36px;top:353px;width:17px;height:1px;background:#e8e8e8"></div>
<div class="a" style="left:48px;top:364px;width:5px;height:1px;background:#e8e8e8"></div>
<div class="a" style="left:48px;top:375px;width:5px;height:1px;background:#e8e8e8"></div>
<div class="a" style="left:48px;top:386px;width:5px;height:1px;background:#e8e8e8"></div>
<div class="a" style="left:48px;top:397px;width:5px;height:1px;background:#e8e8e8"></div>
<div class="a" style="left:44px;top:408px;width:9px;height:1px;background:#e8e8e8"></div>
<div class="a" style="left:48px;top:419px;width:5px;height:1px;background:#e8e8e8"></div>
<div class="a" style="left:48px;top:430px;width:5px;height:1px;background:#e8e8e8"></div>
<div class="a" style="left:48px;top:441px;width:5px;height:1px;background:#e8e8e8"></div>
<div class="a" style="left:48px;top:452px;width:5px;height:1px;background:#e8e8e8"></div>
<div class="a" style="left:36px;top:464px;width:17px;height:1px;background:#e8e8e8"></div>
<div class="a" style="left:48px;top:475px;width:5px;height:1px;background:#e8e8e8"></div>
<div class="a" style="left:48px;top:486px;width:5px;height:1px;background:#e8e8e8"></div>
<div class="a" style="left:48px;top:497px;width:5px;height:1px;background:#e8e8e8"></div>
<div class="a" style="left:48px;top:508px;width:5px;height:1px;background:#e8e8e8"></div>
<div class="a" style="left:44px;top:519px;width:9px;height:1px;background:#e8e8e8"></div>
<div class="a" style="left:48px;top:530px;width:5px;height:1px;background:#e8e8e8"></div>
<div class="a" style="left:48px;top:541px;width:5px;height:1px;background:#e8e8e8"></div>
<div class="a" style="left:48px;top:552px;width:5px;height:1px;background:#e8e8e8"></div>
<div class="a" style="left:48px;top:563px;width:5px;height:1px;background:#e8e8e8"></div>
<div class="a" style="left:36px;top:574px;width:17px;height:1px;background:#e8e8e8"></div>
<div class="a" style="left:48px;top:585px;width:5px;height:1px;background:#e8e8e8"></div>
<div class="a" style="left:48px;top:596px;width:5px;height:1px;background:#e8e8e8"></div>
<div class="a" style="left:48px;top:607px;width:5px;height:1px;background:#e8e8e8"></div>
<div class="a" style="left:48px;top:618px;width:5px;height:1px;background:#e8e8e8"></div>
<div class="a" style="left:44px;top:629px;width:9px;height:1px;background:#e8e8e8"></div>
<div class="a" style="left:48px;top:640px;width:5px;height:1px;background:#e8e8e8"></div>
<div class="a" style="left:48px;top:651px;width:5px;height:1px;background:#e8e8e8"></div>
<div class="a" style="left:48px;top:662px;width:5px;height:1px;background:#e8e8e8"></div>
<div class="a" style="left:48px;top:673px;width:5px;height:1px;background:#e8e8e8"></div>
<div class="a" style="left:36px;top:684px;width:17px;height:1px;background:#e8e8e8"></div>
<div class="a" style="left:48px;top:696px;width:5px;height:1px;background:#e8e8e8"></div>
<div class="a" style="left:48px;top:707px;width:5px;height:1px;background:#e8e8e8"></div>
<div class="a" style="left:48px;top:718px;width:5px;height:1px;background:#e8e8e8"></div>
<div class="a" style="left:48px;top:729px;width:5px;height:1px;background:#e8e8e8"></div>
<div class="a" style="left:44px;top:740px;width:9px;height:1px;background:#e8e8e8"></div>
<div class="a" style="left:48px;top:751px;width:5px;height:1px;background:#e8e8e8"></div>
<div class="a" style="left:48px;top:762px;width:5px;height:1px;background:#e8e8e8"></div>
<div class="a" style="left:48px;top:773px;width:5px;height:1px;background:#e8e8e8"></div>
<div class="a" style="left:48px;top:784px;width:5px;height:1px;background:#e8e8e8"></div>
<div class="a" style="left:36px;top:795px;width:17px;height:1px;background:#e8e8e8"></div>
<div class="a" style="left:0;top:121px;width:54px;height:677px;overflow:hidden"><div class="a" style="left:34px;top:14px;width:14px;height:26px;overflow:hidden"><div class="t" style="left:2px;top:0;font-size:13.5px;color:#e8e8e8;transform-origin:0 0;transform:translate(0px,4.0px) rotate(-90deg) scaleY(0.85)">0</div></div><div class="a" style="left:34px;top:124px;width:14px;height:26px;overflow:hidden"><div class="t" style="left:2px;top:0;font-size:13.5px;color:#e8e8e8;transform-origin:0 0;transform:translate(0px,14.0px) rotate(-90deg) scaleY(0.85)">50</div></div><div class="a" style="left:34px;top:235px;width:14px;height:26px;overflow:hidden"><div class="t" style="left:2px;top:0;font-size:13.5px;color:#e8e8e8;transform-origin:0 0;transform:translate(0px,19.0px) rotate(-90deg) scaleY(0.85)">100</div></div><div class="a" style="left:34px;top:346px;width:14px;height:26px;overflow:hidden"><div class="t" style="left:2px;top:0;font-size:13.5px;color:#e8e8e8;transform-origin:0 0;transform:translate(0px,19.0px) rotate(-90deg) scaleY(0.85)">150</div></div><div class="a" style="left:34px;top:456px;width:14px;height:26px;overflow:hidden"><div class="t" style="left:2px;top:0;font-size:13.5px;color:#e8e8e8;transform-origin:0 0;transform:translate(0px,19.0px) rotate(-90deg) scaleY(0.85)">200</div></div><div class="a" style="left:34px;top:566px;width:14px;height:26px;overflow:hidden"><div class="t" style="left:2px;top:0;font-size:13.5px;color:#e8e8e8;transform-origin:0 0;transform:translate(0px,19.0px) rotate(-90deg) scaleY(0.85)">250</div></div><div class="a" style="left:34px;top:677px;width:14px;height:26px;overflow:hidden"><div class="t" style="left:2px;top:0;font-size:13.5px;color:#e8e8e8;transform-origin:0 0;transform:translate(0px,19.0px) rotate(-90deg) scaleY(0.85)">300</div></div></div>
<div class="a" style="left:53px;top:121px;width:1px;height:677px;background:#e8e8e8"></div>
<svg style="left:0;top:0" width="1" height="1"></svg>
<svg style="left:280px;top:106px" width="320" height="16" viewBox="0 0 320 16">
<path d="M11.5 7.8 H302" stroke="#1d9ae2" stroke-width="2"/>
<circle cx="7.8" cy="7.8" r="3.3" fill="#1e1f1f" stroke="#1d9ae2" stroke-width="2"/>
<circle cx="306" cy="7.8" r="3.3" fill="#1e1f1f" stroke="#1d9ae2" stroke-width="2"/>
</svg>
<svg style="left:38px;top:354px" width="16" height="214" viewBox="0 0 16 214">
<path d="M8 11 V201" stroke="#1d9ae2" stroke-width="2"/>
<circle cx="8" cy="7.5" r="3.3" fill="#1e1f1f" stroke="#1d9ae2" stroke-width="2"/>
<circle cx="8" cy="205" r="3.3" fill="#1e1f1f" stroke="#1d9ae2" stroke-width="2"/>
</svg>
<svg style="left:605px;top:116px" width="12" height="6" viewBox="0 0 12 6"><path d="M0.5 0.5 H11 L6 5.5 Z" fill="#e8e8e8"/></svg>
<svg style="left:48px;top:523px" width="6" height="12" viewBox="0 0 6 12"><path d="M0.5 0.5 L5.5 6 L0.5 11.5 L2 6 Z" fill="#e8e8e8"/></svg>
<div class="a" style="left:30px;top:97px;width:24px;height:24px;border:1px solid #1c1c1c;border-radius:5px;background:#2f2f2f"></div>
<svg style="left:35px;top:101px" width="12" height="16" viewBox="0 0 12 16">
<path d="M2.7 7 V5 A3.3 3.3 0 0 1 9.3 5 V7" fill="none" stroke="#ececec" stroke-width="1.8"/>
<rect x="0.8" y="7" width="10.4" height="8" fill="#ececec"/>
</svg>
<div class="a" style="left:821px;top:97px;width:24px;height:22px;border:1px solid #1c1c1c;border-radius:5px;background:#2f2f2f"></div>
<svg style="left:826px;top:101px" width="14" height="12" viewBox="0 0 14 12">
<rect x="0.7" y="0.7" width="12.6" height="8" rx="1" fill="none" stroke="#ececec" stroke-width="1.3"/>
<path d="M7 9 V11 M4 11.3 H10" stroke="#ececec" stroke-width="1.3"/>
</svg>
<!-- page shadow/border -->
<div class="a" style="left:205px;top:132px;width:465px;height:658px;background:#fff;border:1px solid #b8b8b8;box-shadow:1px 1px 0 rgba(80,88,105,.75),2px 2px 5px rgba(0,0,0,.28)"></div>
<!-- spinner image -->
<svg style="left:339px;top:254px;overflow:hidden" width="194" height="108" viewBox="0 0 194 108">
<defs>
<linearGradient id="sbg" x1="0" y1="0" x2="1" y2="0.3"><stop offset="0" stop-color="#d2d2d2"/><stop offset="0.5" stop-color="#dededd"/><stop offset="1" stop-color="#e8e8e6"/></linearGradient>
<filter id="blur1" x="-50%" y="-50%" width="200%" height="200%"><feGaussianBlur stdDeviation="5"/></filter>
<radialGradient id="hole1" cx="0.45" cy="0.45" r="0.55"><stop offset="0" stop-color="#e2e5e5"/><stop offset="0.8" stop-color="#cdd0d0"/><stop offset="1" stop-color="#a0a4a4"/></radialGradient>
<radialGradient id="red1" cx="0.4" cy="0.35" r="0.7"><stop offset="0" stop-color="#f24a36"/><stop offset="1" stop-color="#d42a1e"/></radialGradient>
</defs>
<rect width="194" height="108" fill="url(#sbg)"/>
<path d="M88 14 A36.5 36.5 0 0 1 121 65 Q116 76 120 88 Q126 100 143 112 H34 Q51 100 57 88 Q61 76 55 65 A36.5 36.5 0 0 1 88 14 Z" fill="#8c8c8c" opacity="0.55" filter="url(#blur1)"/>
<path d="M94.5 11 A36.5 36.5 0 0 1 128 62 Q122 74 126 86 Q132 100 143 108 H50 Q57 100 63 86 Q67 74 61 62 A36.5 36.5 0 0 1 94.5 11 Z" fill="url(#red1)"/>
<circle cx="94.5" cy="47.5" r="27" fill="#0e0e0e"/>
<circle cx="94.5" cy="47.5" r="19.5" fill="none" stroke="#3a3a3a" stroke-width="1.2"/>
<circle cx="94.5" cy="47.5" r="16.5" fill="url(#hole1)"/>
<circle cx="94" cy="114.5" r="28" fill="#ea3a2a"/>
</svg>
<!-- rings image -->
<svg style="left:288px;top:362px" width="298" height="197" viewBox="0 0 298 197">
<defs>
<linearGradient id="gold1" x1="0" y1="0" x2="0" y2="1"><stop offset="0" stop-color="#9a7e44"/><stop offset="0.2" stop-color="#c0a46a"/><stop offset="0.45" stop-color="#a88c52"/><stop offset="0.7" stop-color="#bfa466"/><stop offset="0.86" stop-color="#e2d29c"/><stop offset="1" stop-color="#9c7e42"/></linearGradient>
<linearGradient id="gold2" x1="0" y1="0" x2="0.15" y2="1"><stop offset="0" stop-color="#9a7c40"/><stop offset="0.22" stop-color="#c8ac72"/><stop offset="0.5" stop-color="#a48850"/><stop offset="0.72" stop-color="#c0a468"/><stop offset="0.86" stop-color="#dccc94"/><stop offset="1" stop-color="#9a7c40"/></linearGradient>
</defs>
<g transform="translate(119 91.2) rotate(4)">
<path fill-rule="evenodd" fill="url(#gold1)" stroke="#8a6c34" stroke-width="0.8" d="M-58 0 A58 42 0 1 0 58 0 A58 42 0 1 0 -58 0 Z M-49 0 A49 25.2 0 1 0 49 0 A49 25.2 0 1 0 -49 0 Z"/>
<path d="M-53 -2 A53 36 0 0 1 53 -2" fill="none" stroke="#7a5c28" stroke-width="1" opacity="0.8"/><path d="M-48 -4 A49 25.2 0 0 1 48 -4" fill="none" stroke="#d8c490" stroke-width="1.2"/>
<path d="M-40 30 A58 42 0 0 0 40 30" fill="none" stroke="#eadcac" stroke-width="2.5" opacity="0.7"/>
</g>
<g transform="translate(183 88.5) rotate(22)">
<path fill-rule="evenodd" fill="url(#gold2)" stroke="#8a6c34" stroke-width="0.8" d="M-56 0 A56 41 0 1 0 56 0 A56 41 0 1 0 -56 0 Z M-47.5 -2 A47.5 25 0 1 0 47.5 -2 A47.5 25 0 1 0 -47.5 -2 Z"/>
<path d="M-51 -3 A51 35 0 0 1 51 -3" fill="none" stroke="#7a5c28" stroke-width="1" opacity="0.8"/><path d="M-46 -6 A47.5 25 0 0 1 46 -6" fill="none" stroke="#d4c08a" stroke-width="1.2"/>
<path d="M-38 29 A56 41 0 0 0 38 29" fill="none" stroke="#e6d8a6" stroke-width="2.5" opacity="0.7"/>
</g>
</svg>
<!-- selection bbox -->
<svg style="left:0;top:0" width="1" height="1" viewBox="0 0 1 1" shape-rendering="crispEdges"></svg>
<svg style="left:280px;top:355px" width="320" height="210" viewBox="280 355 320 210" shape-rendering="crispEdges">
<path d="M293 362.5 H585" stroke="#4f4fe0" stroke-width="1" stroke-dasharray="4 4"/>
<path d="M293 558.5 H585" stroke="#4f4fe0" stroke-width="1" stroke-dasharray="4 4" stroke-dashoffset="-1"/>
<path d="M288.5 364 V558" stroke="#4f4fe0" stroke-width="1" stroke-dasharray="4 4" stroke-dashoffset="0"/>
<path d="M585.5 364 V558" stroke="#4f4fe0" stroke-width="1" stroke-dasharray="4 4" stroke-dashoffset="0"/>
</svg>
<!-- handles -->
<svg style="left:0;top:0" width="1689" height="884" viewBox="0 0 1689 884">
<defs>
<path id="hh" d="M-7.7 0 L-3.2 -4.6 V-2 H3.2 V-4.6 L7.7 0 L3.2 4.6 V2 H-3.2 V4.6 Z"/>
<path id="hd" d="M-5.5 -5.5 H1 L-1 -3.5 L3.5 1 L5.5 -1 V5.5 H-1 L1 3.5 L-3.5 -1 L-5.5 1 Z"/>
</defs>
<use href="#hh" x="279.5" y="460.4" fill="#000"/>
<use href="#hh" x="594.5" y="460.4" fill="#000"/>
<g transform="translate(437.6 567.4) rotate(90)"><use href="#hh" fill="#000"/></g>
<g transform="translate(437.6 353.5) rotate(90) scale(1 1)"><use href="#hh" fill="#2fd0dc"/></g>
<use href="#hd" x="282.5" y="356.5" fill="#000"/>
<use href="#hd" x="591.5" y="564.5" fill="#000"/>
<g transform="translate(591.5 356.5) rotate(90)"><use href="#hd" fill="#000"/></g>
<g transform="translate(282.5 564.5) rotate(90)"><use href="#hd" fill="#000"/></g>
</svg>
<!-- scrollbars -->
<div class="a" style="left:829px;top:336px;width:8px;height:245px;border-radius:4px;background:#a3a3a3"></div>
<div class="a" style="left:228px;top:804px;width:392px;height:8px;border-radius:4px;background:#a3a3a3"></div>
<div class="a" style="left:846px;top:97px;width:12px;height:721px;background:#333333"></div>
<div class="a" style="left:850.5px;top:450.5px;width:2.6px;height:2.6px;border-radius:50%;background:#f0f0f0"></div>
<div class="a" style="left:850.5px;top:455.5px;width:2.6px;height:2.6px;border-radius:50%;background:#f0f0f0"></div>
<div class="a" style="left:850.5px;top:460.5px;width:2.6px;height:2.6px;border-radius:50%;background:#f0f0f0"></div>
<!-- color managed button -->
<div class="a" style="left:821px;top:800px;width:25px;height:17px;border:1px solid #1c1c1c;border-radius:5px;background:#2e2e2e"></div>
<svg style="left:824px;top:800px" width="18" height="18" viewBox="0 0 18 18">
<circle cx="9" cy="4.5" r="3.3" fill="#2e2e2e" stroke="#e0e0e0" stroke-width="0.9"/>
<circle cx="5" cy="10.7" r="3.3" fill="#0a8a0a" stroke="#e0e0e0" stroke-width="0.9"/>
<circle cx="13" cy="10.7" r="3.3" fill="#e02090" stroke="#e0e0e0" stroke-width="0.9"/>
</svg>

<!-- dock tabs bar -->
<div class="a" style="left:859px;top:102px;width:792px;height:37px;background:#262626"></div>
<div class="a" style="left:867px;top:102px;width:184px;height:37px;background:#2e2e2e"></div>
<div class="a" style="left:867px;top:135px;width:184px;height:4px;background:#1f5aa6"></div>
<div class="a" style="left:859px;top:139px;width:792px;height:1px;background:#1e1e1e"></div>
<div class="a" style="left:859px;top:140px;width:792px;height:1px;background:#2b2b2b"></div>
<div class="a" style="left:859px;top:141px;width:792px;height:1px;background:#1e1e1e"></div>
<!-- tab1 icon -->
<svg style="left:878px;top:113px" width="18" height="16" viewBox="0 0 18 16">
<path d="M3 0 H11 L9 3 H1 Z" fill="#1e9be8"/>
<path d="M4 5 H14 L12 8.2 H2 Z" fill="#9fd2f4"/>
<path d="M5 10 H15 L13 13.2 H3 Z" fill="#f2f2f2"/>
</svg>
<div class="t" style="left:897px;top:113px;font-size:15px;letter-spacing:-0.15px">Layers and Objects</div>
<svg style="left:1027px;top:116px" width="9" height="9" viewBox="0 0 9 9"><path d="M1 1 L8 8 M8 1 L1 8" stroke="#a8a8a8" stroke-width="1.8"/></svg>
<!-- tab2 -->
<svg style="left:1072px;top:111px" width="18" height="18" viewBox="0 0 18 18">
<path d="M1 1.2 H12 M1.2 1 V14" fill="none" stroke="#e0e0e0" stroke-width="1.3"/>
<path d="M15.5 1.5 L16.8 2.8 L9 11 L7.5 9.7 Z" fill="#f0f0f0"/>
<path d="M7 10.2 L8.5 11.5 Q7 14.5 3 16.5 Q4.5 12.5 7 10.2Z" fill="#f0f0f0"/>
<path d="M3 16.5 Q3.8 14.5 5 13.5 L6 14.5 Q4.5 16 3 16.5Z" fill="#1e9be8"/>
</svg>
<svg style="left:0;top:0" width="1" height="1"></svg>
<div class="t" style="left:1090px;top:113px;font-size:15px">Fill and Stroke</div>
<svg style="left:1190px;top:116px" width="9" height="9" viewBox="0 0 9 9"><path d="M1 1 L8 8 M8 1 L1 8" stroke="#a8a8a8" stroke-width="1.8"/></svg>
<!-- tab3 -->
<svg style="left:1235px;top:111px" width="18" height="18" viewBox="0 0 18 18">
<path d="M5 10.5 A6.3 6.3 0 1 1 10.5 14.5" fill="none" stroke="#e8e8e8" stroke-width="1.8"/>
<path d="M1.5 7 L5 11.5 L8.5 7 Z" fill="#e8e8e8"/>
<circle cx="10.5" cy="7.5" r="1.8" fill="#16a016"/>
<rect x="0.5" y="12" width="5.5" height="5.5" fill="#e8e8e8"/>
</svg>
<div class="t" style="left:1254px;top:113px;font-size:15px">Transform</div>
<svg style="left:1326px;top:116px" width="9" height="9" viewBox="0 0 9 9"><path d="M1 1 L8 8 M8 1 L1 8" stroke="#a8a8a8" stroke-width="1.8"/></svg>
<!-- tabs dropdown -->
<div class="a" style="left:1622px;top:105px;width:30px;height:30px;border-radius:5px;background:#2a2a2a"></div>
<svg style="left:1630px;top:116px" width="14" height="8" viewBox="0 0 14 8"><path d="M1 1 L7 7 L13 1" fill="none" stroke="#bdbdbd" stroke-width="1.6"/></svg>
<!-- dock toolbar -->
<div class="a" style="left:859px;top:142px;width:792px;height:36px;background:#2b2b2b"></div>
<svg style="left:870px;top:150px" width="16" height="16" viewBox="0 0 16 16">
<path d="M8.5 0.5 V8 M4.7 4.2 H12.3" stroke="#16a816" stroke-width="2"/>
<path d="M3 10.5 H14 L12 13.5 H1 Z" fill="#f4f4f4"/>
</svg>
<svg style="left:1180px;top:154px" width="14" height="9" viewBox="0 0 14 9"><path d="M1 8 L7 2 L13 8" fill="none" stroke="#f0f0f0" stroke-width="1.8"/></svg>
<svg style="left:1216px;top:152px" width="14" height="9" viewBox="0 0 14 9"><path d="M1 1 L7 7 L13 1" fill="none" stroke="#f0f0f0" stroke-width="1.8"/></svg>
<svg style="left:1252px;top:150px" width="14" height="16" viewBox="0 0 14 16">
<path d="M1 3 H13 M5 3 V1.2 H9 V3" fill="none" stroke="#f0f0f0" stroke-width="1.6"/>
<path d="M2.2 4.5 H11.8 L11 15 H3 Z" fill="#f0f0f0"/>
<path d="M5 6 V13.5 M7 6 V13.5 M9 6 V13.5" stroke="#8a8a8a" stroke-width="0.8"/>
</svg>
<div class="a" style="left:1281px;top:143px;width:1px;height:32px;background:#262626"></div>
<svg style="left:1296px;top:150px" width="16" height="16" viewBox="0 0 16 16">
<g transform="translate(8 8)" fill="#f0f0f0">
<circle r="5"/>
<rect x="-1.5" y="-7.3" width="3" height="14.6"/><rect x="-1.5" y="-7.3" width="3" height="14.6" transform="rotate(45)"/><rect x="-1.5" y="-7.3" width="3" height="14.6" transform="rotate(90)"/><rect x="-1.5" y="-7.3" width="3" height="14.6" transform="rotate(135)"/>
</g>
<circle cx="8" cy="8" r="2.4" fill="#2b2b2b"/>
</svg>
<div class="ent" style="left:1327px;top:141px;width:324px;height:34px;background:#2d2d2d;border-color:#1e1e1e"></div>
<svg style="left:1332px;top:150px" width="17" height="17" viewBox="0 0 17 17">
<circle cx="6.8" cy="6.8" r="5.4" fill="none" stroke="#f0f0f0" stroke-width="1.6"/>
<path d="M10.7 10.7 L15.5 15.5" stroke="#f0f0f0" stroke-width="1.8"/>
</svg>
<!-- list -->
<div class="a" style="left:859px;top:178px;width:792px;height:631px;background:#2d2d2d"></div>
<div class="a" style="left:860px;top:179px;width:786px;height:27px;background:#213f66"></div>
<div class="a" style="left:860px;top:206px;width:786px;height:27px;background:#184f93"></div>
<div class="a" style="left:1644px;top:180px;width:6px;height:25px;background:#3d86ee"></div>
<div class="a" style="left:1644px;top:207px;width:6px;height:25px;background:#3d86ee"></div>
<div class="a" style="left:1644px;top:234px;width:6px;height:25px;background:#3d86ee"></div>
<svg style="left:862px;top:190px" width="10" height="6" viewBox="0 0 10 6"><path d="M0.5 0.5 H9.5 L5 5.5 Z" fill="#cfcfcf"/></svg>
<svg style="left:880px;top:184px" width="13" height="15" viewBox="0 0 13 15">
<path d="M0.8 0.8 H8 L12 4.8 V14.2 H0.8 Z" fill="none" stroke="#3d86ee" stroke-width="1.5"/>
<path d="M8 0.8 V4.8 H12" fill="none" stroke="#3d86ee" stroke-width="1"/>
</svg>
<div class="t" style="left:900px;top:186px;font-size:15px">Layer 1</div>
<svg style="left:892px;top:212px" width="14" height="13" viewBox="0 0 14 13">
<rect x="0.8" y="0.8" width="12.4" height="11.4" fill="none" stroke="#3d86ee" stroke-width="1.5"/>
<path d="M3 10 L6.5 6.5 L9.5 9 L11 8 V10 Z" fill="#3d86ee"/><circle cx="9.5" cy="4.5" r="1.3" fill="#3d86ee"/>
</svg>
<div class="t" style="left:913px;top:213px;font-size:15px">image1-7</div>
<svg style="left:892px;top:239px" width="14" height="13" viewBox="0 0 14 13">
<rect x="0.8" y="0.8" width="12.4" height="11.4" fill="none" stroke="#3d86ee" stroke-width="1.5"/>
<path d="M3 10 L6.5 6.5 L9.5 9 L11 8 V10 Z" fill="#3d86ee"/><circle cx="9.5" cy="4.5" r="1.3" fill="#3d86ee"/>
</svg>
<div class="t" style="left:913px;top:240px;font-size:15px">image1</div>

<!-- commands bar -->
<div class="a" style="left:1652px;top:97px;width:37px;height:721px;background:#333333"></div>
<!-- new -->
<svg style="left:1672px;top:110px" width="18" height="17" viewBox="0 0 18 17">
<path d="M1 3 H8 L12 7 V15.5 H1 Z" fill="none" stroke="#f0f0f0" stroke-width="1.6"/><path d="M8 3 V7 H12" fill="none" stroke="#f0f0f0" stroke-width="1.2"/>
<path d="M14 0 L15 2.5 L17.5 2.5 L15.5 4 L16.3 6.5 L14 5 L11.7 6.5 L12.5 4 L10.5 2.5 L13 2.5 Z" fill="#16a016"/>
</svg>
<!-- open -->
<svg style="left:1672px;top:145px" width="18" height="17" viewBox="0 0 18 17">
<path d="M1 1 H6 L7.5 3 H12 V5 H4 L1 14 Z" fill="#f0f0f0"/><path d="M4.5 6.5 H18 L15 15.5 H1 Z" fill="#f0f0f0"/>
</svg>
<!-- save -->
<svg style="left:1672px;top:179px" width="18" height="18" viewBox="0 0 18 18">
<path d="M8.5 0 V6" stroke="#16a016" stroke-width="2"/><path d="M5 5 L8.5 9 L12 5 Z" fill="#16a016"/>
<path d="M1 10 L3 8 H6 L8.5 10.5 L11 8 H14 L16 10 V17 H1 Z" fill="#f0f0f0"/><rect x="4" y="12" width="9" height="2" fill="#333"/>
</svg>
<!-- print -->
<svg style="left:1672px;top:215px" width="18" height="16" viewBox="0 0 18 16">
<rect x="4" y="0.5" width="10" height="3" fill="#e0e0e0"/>
<path d="M0.5 5 H17.5 V11 H14 V9 H4 V11 H0.5 Z" fill="#e0e0e0"/>
<rect x="4" y="10" width="10" height="5.5" fill="#e0e0e0"/>
</svg>
<div class="a" style="left:1662px;top:247px;width:27px;height:1px;background:#2c2c2c"></div>
<!-- import -->
<svg style="left:1672px;top:263px" width="18" height="18" viewBox="0 0 18 18">
<path d="M3 4 V1 H10 L14 5 V17 H3 V13" fill="none" stroke="#f0f0f0" stroke-width="1.6"/>
<path d="M0 9 H7" stroke="#16a016" stroke-width="2"/><path d="M6 5.5 L10 9 L6 12.5 Z" fill="#16a016"/>
</svg>
<!-- export -->
<svg style="left:1672px;top:298px" width="18" height="18" viewBox="0 0 18 18">
<path d="M12 7 V5 L8 1 H1 V17 H12 V12" fill="none" stroke="#f0f0f0" stroke-width="1.6"/>
<path d="M7 9.5 H14" stroke="#16a016" stroke-width="2"/><path d="M13 6 L17 9.5 L13 13 Z" fill="#16a016"/>
</svg>
<div class="a" style="left:1662px;top:331px;width:27px;height:1px;background:#2c2c2c"></div>
<!-- undo -->
<svg style="left:1672px;top:348px" width="17" height="15" viewBox="0 0 17 15">
<path d="M3 5 H10.5 Q15 5 15 9.5 Q15 13.5 10.5 13.5 H8" fill="none" stroke="#f0f0f0" stroke-width="1.8"/>
<path d="M5.5 1 L1 5 L5.5 9" fill="none" stroke="#f0f0f0" stroke-width="1.8"/>
</svg>
<!-- redo -->
<svg style="left:1672px;top:383px" width="17" height="15" viewBox="0 0 17 15">
<path d="M14 5 H6.5 Q2 5 2 9.5 Q2 13.5 6.5 13.5 H9" fill="none" stroke="#8a8a8a" stroke-width="1.8"/>
<path d="M11.5 1 L16 5 L11.5 9" fill="none" stroke="#8a8a8a" stroke-width="1.8"/>
</svg>
<div class="a" style="left:1662px;top:415px;width:27px;height:1px;background:#2c2c2c"></div>
<!-- duplicate -->
<svg style="left:1672px;top:431px" width="18" height="18" viewBox="0 0 18 18">
<rect x="0.5" y="0.5" width="10" height="10" fill="#f0f0f0"/><rect x="5.5" y="5.5" width="12" height="12" fill="#333"/><rect x="7" y="7" width="11" height="11" fill="#e8e8e8"/>
</svg>
<!-- cut -->
<svg style="left:1672px;top:466px" width="18" height="18" viewBox="0 0 18 18">
<path d="M3 0.5 L12 12 M14 0.5 L5 12" stroke="#f0f0f0" stroke-width="1.6"/>
<circle cx="4" cy="14" r="3" fill="none" stroke="#f0f0f0" stroke-width="1.6"/><circle cx="13" cy="14" r="3" fill="none" stroke="#f0f0f0" stroke-width="1.6"/>
</svg>
<!-- paste -->
<svg style="left:1672px;top:501px" width="18" height="18" viewBox="0 0 18 18">
<rect x="1" y="2" width="14" height="15" fill="none" stroke="#f0f0f0" stroke-width="1.5"/>
<rect x="4" y="0.5" width="8" height="3" fill="#f0f0f0"/><rect x="3.5" y="5" width="9" height="10" fill="#f0f0f0"/>
</svg>
<div class="a" style="left:1662px;top:535px;width:27px;height:1px;background:#2c2c2c"></div>
<!-- zoom selection -->
<svg style="left:1671px;top:550px" width="19" height="19" viewBox="0 0 19 19">
<circle cx="8" cy="8" r="7.2" fill="#f0f0f0"/><rect x="4" y="4" width="8" height="8" fill="none" stroke="#333" stroke-width="1.2" stroke-dasharray="1.2 1"/>
<path d="M13 13 L17.5 17.5" stroke="#f0f0f0" stroke-width="2.4"/>
</svg>
<svg style="left:1671px;top:585px" width="19" height="19" viewBox="0 0 19 19">
<circle cx="8" cy="8" r="7.2" fill="#f0f0f0"/><circle cx="7" cy="7" r="3" fill="#333"/><rect x="7.5" y="7.5" width="4.5" height="4.5" fill="#333"/>
<path d="M13 13 L17.5 17.5" stroke="#f0f0f0" stroke-width="2.4"/>
</svg>
<svg style="left:1671px;top:620px" width="19" height="19" viewBox="0 0 19 19">
<circle cx="8" cy="8" r="7.2" fill="#f0f0f0"/><rect x="5" y="3" width="6" height="10" fill="#333"/><rect x="6.2" y="4.2" width="3.6" height="7.6" fill="#f0f0f0"/>
<path d="M13 13 L17.5 17.5" stroke="#f0f0f0" stroke-width="2.4"/>
</svg>
<svg style="left:1672px;top:656px" width="18" height="16" viewBox="0 0 18 16">
<path d="M0.5 3 V0.5 H3 M15 0.5 H17.5 V3 M17.5 13 V15.5 H15 M3 15.5 H0.5 V13" fill="none" stroke="#b0b0b0" stroke-width="1"/>
<rect x="3.5" y="2.5" width="11" height="11" fill="none" stroke="#f0f0f0" stroke-width="1.4"/>
<path d="M9 5 V11 M6 8 H12" stroke="#f0f0f0" stroke-width="1.4"/>
</svg>
<div class="a" style="left:1662px;top:689px;width:27px;height:1px;background:#2c2c2c"></div>
<!-- clone -->
<svg style="left:1672px;top:705px" width="18" height="18" viewBox="0 0 18 18">
<rect x="0.5" y="0.5" width="10" height="10" fill="#f0f0f0"/><rect x="5.5" y="5.5" width="12.5" height="12.5" fill="#333"/><rect x="7" y="7" width="11" height="11" fill="#0b9a0b"/>
</svg>
<svg style="left:1672px;top:740px" width="18" height="18" viewBox="0 0 18 18">
<rect x="0.5" y="0.5" width="10" height="10" fill="#f0f0f0"/><rect x="5.5" y="5.5" width="12.5" height="12.5" fill="#333"/>
<path d="M6.5 6.5 H18 V18 H6.5 Z" fill="none" stroke="#f0f0f0" stroke-width="1.3"/>
<rect x="9" y="11.5" width="7" height="5" fill="#f0f0f0"/><path d="M10.5 11.5 V10 A2 2 0 0 1 14.5 10 V11.5" fill="none" stroke="#f0f0f0" stroke-width="1.2"/>
</svg>
<!-- more -->
<svg style="left:1677px;top:791px" width="7" height="12" viewBox="0 0 7 12"><path d="M0.5 0 L6.5 6 L0.5 12 Z" fill="#e8e8e8"/></svg>

<div class="a" style="left:131px;top:836px;width:16px;height:16px;background:#1a1a1a"></div>
<div class="a" style="left:148px;top:836px;width:16px;height:16px;background:#333333"></div>
<div class="a" style="left:165px;top:836px;width:16px;height:16px;background:#4d4d4d"></div>
<div class="a" style="left:182px;top:836px;width:16px;height:16px;background:#666666"></div>
<div class="a" style="left:199px;top:836px;width:16px;height:16px;background:#999999"></div>
<div class="a" style="left:216px;top:836px;width:16px;height:16px;background:#b3b3b3"></div>
<div class="a" style="left:233px;top:836px;width:16px;height:16px;background:#cccccc"></div>
<div class="a" style="left:250px;top:836px;width:16px;height:16px;background:#e6e6e6"></div>
<div class="a" style="left:267px;top:836px;width:16px;height:16px;background:#ececec"></div>
<div class="a" style="left:284px;top:836px;width:16px;height:16px;background:#f2f2f2"></div>
<div class="a" style="left:301px;top:836px;width:16px;height:16px;background:#f8f8f8"></div>
<div class="a" style="left:318px;top:836px;width:16px;height:16px;background:#800000"></div>
<div class="a" style="left:335px;top:836px;width:16px;height:16px;background:#ff0000"></div>
<div class="a" style="left:352px;top:836px;width:16px;height:16px;background:#808000"></div>
<div class="a" style="left:369px;top:836px;width:16px;height:16px;background:#ffff00"></div>
<div class="a" style="left:386px;top:836px;width:16px;height:16px;background:#008000"></div>
<div class="a" style="left:403px;top:836px;width:16px;height:16px;background:#00ff00"></div>
<div class="a" style="left:420px;top:836px;width:16px;height:16px;background:#008080"></div>
<div class="a" style="left:437px;top:836px;width:16px;height:16px;background:#00ffff"></div>
<div class="a" style="left:454px;top:836px;width:16px;height:16px;background:#000080"></div>
<div class="a" style="left:471px;top:836px;width:16px;height:16px;background:#0000ff"></div>
<div class="a" style="left:488px;top:836px;width:16px;height:16px;background:#800080"></div>
<div class="a" style="left:505px;top:836px;width:16px;height:16px;background:#ff00ff"></div>
<div class="a" style="left:522px;top:836px;width:16px;height:16px;background:#2b0000"></div>
<div class="a" style="left:539px;top:836px;width:16px;height:16px;background:#550000"></div>
<div class="a" style="left:556px;top:836px;width:16px;height:16px;background:#800000"></div>
<div class="a" style="left:573px;top:836px;width:16px;height:16px;background:#aa0000"></div>
<div class="a" style="left:590px;top:836px;width:16px;height:16px;background:#d40000"></div>
<div class="a" style="left:607px;top:836px;width:16px;height:16px;background:#ff0000"></div>
<div class="a" style="left:624px;top:836px;width:16px;height:16px;background:#ff2a2a"></div>
<div class="a" style="left:641px;top:836px;width:16px;height:16px;background:#ff5555"></div>
<div class="a" style="left:658px;top:836px;width:16px;height:16px;background:#ff8080"></div>
<div class="a" style="left:675px;top:836px;width:16px;height:16px;background:#ffaaaa"></div>
<div class="a" style="left:692px;top:836px;width:16px;height:16px;background:#ffd5d5"></div>
<div class="a" style="left:709px;top:836px;width:16px;height:16px;background:#280b0b"></div>
<div class="a" style="left:726px;top:836px;width:16px;height:16px;background:#501616"></div>
<div class="a" style="left:743px;top:836px;width:16px;height:16px;background:#782121"></div>
<div class="a" style="left:760px;top:836px;width:16px;height:16px;background:#a02c2c"></div>
<div class="a" style="left:777px;top:836px;width:16px;height:16px;background:#c83737"></div>
<div class="a" style="left:794px;top:836px;width:16px;height:16px;background:#d35f5f"></div>
<div class="a" style="left:811px;top:836px;width:16px;height:16px;background:#de8787"></div>
<div class="a" style="left:828px;top:836px;width:16px;height:16px;background:#e9afaf"></div>
<div class="a" style="left:845px;top:836px;width:16px;height:16px;background:#f4d7d7"></div>
<div class="a" style="left:862px;top:836px;width:16px;height:16px;background:#241c1c"></div>
<div class="a" style="left:879px;top:836px;width:16px;height:16px;background:#483737"></div>
<div class="a" style="left:896px;top:836px;width:16px;height:16px;background:#6c5353"></div>
<div class="a" style="left:913px;top:836px;width:16px;height:16px;background:#916f6f"></div>
<div class="a" style="left:930px;top:836px;width:16px;height:16px;background:#ac9393"></div>
<div class="a" style="left:947px;top:836px;width:16px;height:16px;background:#c8b7b7"></div>
<div class="a" style="left:964px;top:836px;width:16px;height:16px;background:#e3dbdb"></div>
<div class="a" style="left:981px;top:836px;width:16px;height:16px;background:#2b1100"></div>
<div class="a" style="left:998px;top:836px;width:16px;height:16px;background:#552200"></div>
<div class="a" style="left:1015px;top:836px;width:16px;height:16px;background:#803300"></div>
<div class="a" style="left:1032px;top:836px;width:16px;height:16px;background:#aa4400"></div>
<div class="a" style="left:1049px;top:836px;width:16px;height:16px;background:#d45500"></div>
<div class="a" style="left:1066px;top:836px;width:16px;height:16px;background:#ff6600"></div>
<div class="a" style="left:1083px;top:836px;width:16px;height:16px;background:#ff7f2a"></div>
<div class="a" style="left:1100px;top:836px;width:16px;height:16px;background:#ff9955"></div>
<div class="a" style="left:1117px;top:836px;width:16px;height:16px;background:#ffb380"></div>
<div class="a" style="left:1134px;top:836px;width:16px;height:16px;background:#ffccaa"></div>
<div class="a" style="left:1151px;top:836px;width:16px;height:16px;background:#ffe6d5"></div>
<div class="a" style="left:1168px;top:836px;width:16px;height:16px;background:#28170b"></div>
<div class="a" style="left:1185px;top:836px;width:16px;height:16px;background:#502d16"></div>
<div class="a" style="left:1202px;top:836px;width:16px;height:16px;background:#784421"></div>
<div class="a" style="left:1219px;top:836px;width:16px;height:16px;background:#a05a2c"></div>
<div class="a" style="left:1236px;top:836px;width:16px;height:16px;background:#c87137"></div>
<div class="a" style="left:1253px;top:836px;width:16px;height:16px;background:#d38d5f"></div>
<div class="a" style="left:1270px;top:836px;width:16px;height:16px;background:#deaa87"></div>
<div class="a" style="left:1287px;top:836px;width:16px;height:16px;background:#e9c6af"></div>
<div class="a" style="left:1304px;top:836px;width:16px;height:16px;background:#f4e3d7"></div>
<div class="a" style="left:1321px;top:836px;width:16px;height:16px;background:#241f1c"></div>
<div class="a" style="left:1338px;top:836px;width:16px;height:16px;background:#483e37"></div>
<div class="a" style="left:1355px;top:836px;width:16px;height:16px;background:#6c5d53"></div>
<div class="a" style="left:1372px;top:836px;width:16px;height:16px;background:#917c6f"></div>
<div class="a" style="left:1389px;top:836px;width:16px;height:16px;background:#ac9d93"></div>
<div class="a" style="left:1406px;top:836px;width:16px;height:16px;background:#c8beb7"></div>
<div class="a" style="left:1423px;top:836px;width:16px;height:16px;background:#e3dedb"></div>
<div class="a" style="left:1440px;top:836px;width:16px;height:16px;background:#2b2200"></div>
<div class="a" style="left:1457px;top:836px;width:16px;height:16px;background:#554400"></div>
<div class="a" style="left:1474px;top:836px;width:16px;height:16px;background:#806600"></div>
<div class="a" style="left:1491px;top:836px;width:16px;height:16px;background:#aa8800"></div>
<div class="a" style="left:1508px;top:836px;width:16px;height:16px;background:#d4aa00"></div>
<div class="a" style="left:1525px;top:836px;width:16px;height:16px;background:#ffcc00"></div>
<div class="a" style="left:1542px;top:836px;width:16px;height:16px;background:#ffd42a"></div>
<div class="a" style="left:1559px;top:836px;width:16px;height:16px;background:#ffdd55"></div>
<div class="a" style="left:1576px;top:836px;width:16px;height:16px;background:#ffe680"></div>
<div class="a" style="left:1593px;top:836px;width:16px;height:16px;background:#ffeeaa"></div>
<!-- big swatches -->
<div class="a" style="left:-5px;top:819px;width:33px;height:33px;background:#fff;overflow:hidden"></div>
<svg style="left:0;top:819px;overflow:hidden" width="28" height="33" viewBox="0 0 28 33">
<path d="M-6 1.5 L25.5 30.5 M25.5 2 L-6 31" stroke="#d0203a" stroke-width="2.2" stroke-linecap="round"/>
</svg>
<div class="a" style="left:29px;top:819px;width:33px;height:33px;background:#000"></div>
<div class="a" style="left:63px;top:819px;width:33px;height:33px;background:#808080"></div>
<div class="a" style="left:97px;top:819px;width:33px;height:33px;background:#fff"></div>
<!-- palette chevrons -->
<svg style="left:1627px;top:831px" width="14" height="9" viewBox="0 0 14 9"><path d="M1 8 L7 2 L13 8" fill="none" stroke="#e8e8e8" stroke-width="1.8"/></svg>
<svg style="left:1658px;top:830px" width="14" height="9" viewBox="0 0 14 9"><path d="M1 1 L7 7 L13 1" fill="none" stroke="#e8e8e8" stroke-width="1.8"/></svg>
<div class="a" style="left:1681px;top:826px;width:30px;height:27px;border:1px solid #1c1c1c;border-radius:5px;background:#303030"></div>
<div class="a" style="left:1684px;top:832px;width:8px;height:2px;background:#e8e8e8"></div>
<div class="a" style="left:1684px;top:837px;width:8px;height:2px;background:#e8e8e8"></div>
<div class="a" style="left:1684px;top:842px;width:8px;height:2px;background:#e8e8e8"></div>

<!-- status bar -->
<div class="t" style="left:18px;top:858px;font-size:15px;color:#e8e8e8">Fill:</div>
<div class="t" style="left:60px;top:858px;font-size:15px;font-weight:bold">Unset</div>
<div class="t" style="left:0px;top:880px;font-size:15px;color:#e8e8e8">Stroke:</div>
<div class="t" style="left:60px;top:880px;font-size:15px;font-weight:bold">Unset</div>
<div class="t" style="left:117px;top:880px;font-size:15px">1.00</div>
<div class="t" style="left:150px;top:867px;font-size:15px">O:</div>
<div class="ent" style="left:166px;top:854px;width:73px;height:40px"></div>
<div class="dv" style="left:204px;top:855px;height:30px"></div><div class="dv" style="left:221px;top:855px;height:30px"></div>
<div class="t" style="left:175px;top:867px;font-size:15px;letter-spacing:-0.5px">100</div>
<div class="a" style="left:207px;top:875px;width:12px;height:1.5px;background:#eee"></div>
<div class="a" style="left:224px;top:875px;width:12px;height:1.5px;background:#666"></div><div class="a" style="left:229.5px;top:869.5px;width:1.5px;height:12px;background:#666"></div>
<div class="a" style="left:255px;top:864px;width:3px;height:20px;background:#3d86ee"></div>
<div class="t" style="left:264px;top:867px;font-size:15px;color:#e8e8e8">Layer 1</div>
<svg style="left:331px;top:867px" width="16" height="15" viewBox="0 0 16 15">
<ellipse cx="8" cy="9.2" rx="6.2" ry="4.4" fill="none" stroke="#ececec" stroke-width="1.8"/>
<circle cx="8" cy="9.2" r="2" fill="#ececec"/>
<path d="M8 0.8 V4 M1.5 3.2 L3.3 5 M14.5 3.2 L12.7 5" stroke="#ececec" stroke-width="1.7"/>
</svg>
<svg style="left:370px;top:867px" width="15" height="16" viewBox="0 0 15 16">
<rect x="0.5" y="7" width="10" height="8.5" fill="#e8e8e8"/>
<path d="M7 7 V4 A3 3 0 0 1 13 4 V5.5" fill="none" stroke="#e8e8e8" stroke-width="1.8"/>
</svg>
<div class="a" style="left:393px;top:855px;width:1px;height:29px;background:#2a2a2a"></div>
<div class="t" style="left:401px;top:867px;font-size:15px;font-weight:bold">Image</div>
<div class="t" style="left:449px;top:867px;font-size:15px">508 × 336: embedded in layer</div>
<div class="t" style="left:651px;top:867px;font-size:15px;font-weight:bold;letter-spacing:-0.6px">Layer 1</div>
<div class="t" style="left:699px;top:867px;font-size:15px">. Click selection again</div>
<div class="t" style="left:851px;top:867px;font-size:15px">to toggle scale/rotation handles.</div>
<div class="a" style="left:1355px;top:855px;width:1px;height:29px;background:#2a2a2a"></div>
<div class="t" style="left:1366px;top:858px;font-size:15px">X:</div>
<div class="t" style="left:1393px;top:858px;font-size:15px;letter-spacing:-0.6px">183.53</div>
<div class="t" style="left:1366px;top:880px;font-size:15px">Y:</div>
<div class="t" style="left:1393px;top:880px;font-size:15px;letter-spacing:-0.6px">179.47</div>
<div class="t" style="left:1444px;top:867px;font-size:15px">Z:</div>
<div class="ent" style="left:1457px;top:854px;width:100px;height:40px"></div>
<div class="dv" style="left:1512px;top:855px;height:30px"></div><div class="dv" style="left:1533px;top:855px;height:30px"></div>
<div class="t" style="left:1470px;top:867px;font-size:15px;letter-spacing:-0.6px">58%</div>
<div class="a" style="left:1516px;top:875px;width:13px;height:1.5px;background:#eee"></div>
<div class="a" style="left:1538px;top:875px;width:12px;height:1.5px;background:#eee"></div><div class="a" style="left:1543.5px;top:869.5px;width:1.5px;height:12px;background:#eee"></div>
<div class="t" style="left:1566px;top:867px;font-size:15px">R:</div>
<div class="ent" style="left:1579px;top:854px;width:108px;height:40px"></div>
<div class="dv" style="left:1642px;top:855px;height:30px"></div><div class="dv" style="left:1664px;top:855px;height:30px"></div>
<div class="t" style="left:1596px;top:867px;font-size:15px;letter-spacing:-0.6px">0.00°</div>
<div class="a" style="left:1646px;top:875px;width:14px;height:1.5px;background:#eee"></div>
<div class="a" style="left:1668px;top:875px;width:13px;height:1.5px;background:#eee"></div><div class="a" style="left:1673.8px;top:869.5px;width:1.5px;height:12px;background:#eee"></div>

</body></html>
